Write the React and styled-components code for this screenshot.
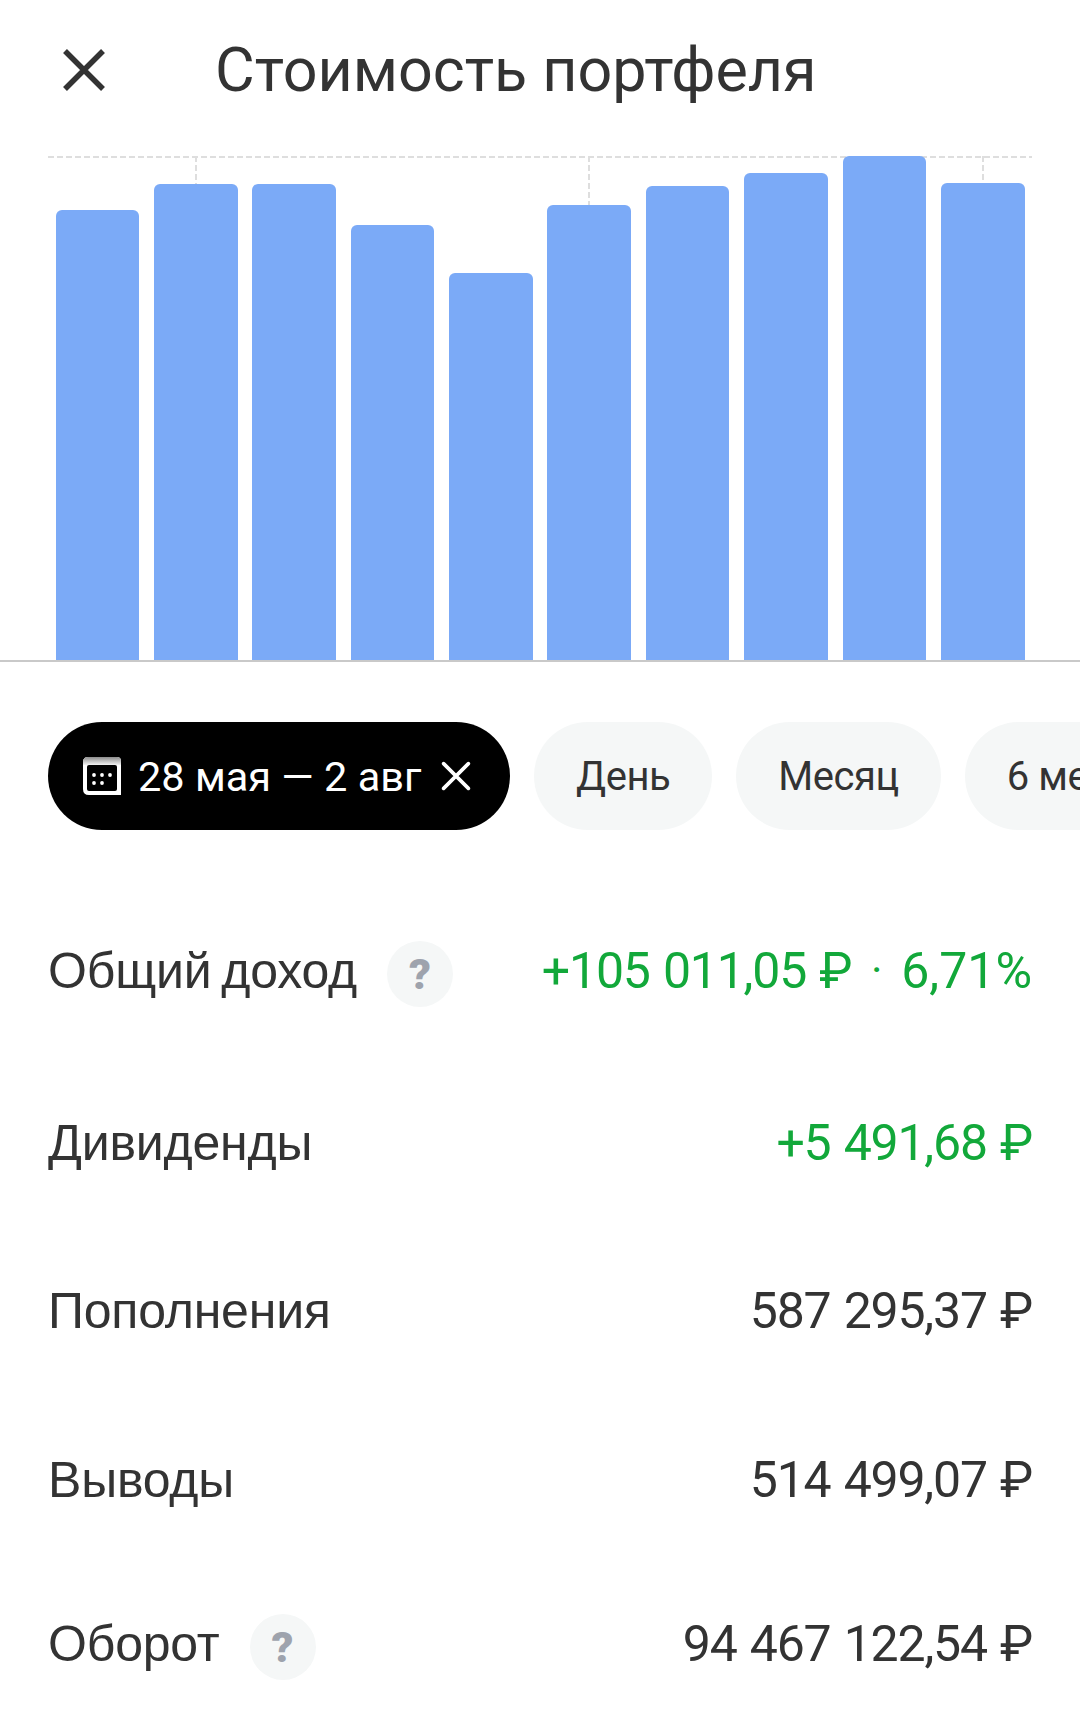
import React from 'react';
import styled, { createGlobalStyle } from 'styled-components';

const GlobalStyle = createGlobalStyle`
  html, body {
    margin: 0;
    padding: 0;
    background: #ffffff;
  }
  body {
    width: 1080px;
    height: 1721px;
    overflow: hidden;
    font-family: Roboto, "Liberation Sans", sans-serif;
    color: #333333;
  }
`;

const Page = styled.div`
  width: 1080px;
  height: 1721px;
  overflow: hidden;
  display: flex;
  flex-direction: column;
`;

const Header = styled.header`
  height: 156px;
  padding: 0 0 16px 61px;
  box-sizing: border-box;
  display: flex;
  align-items: center;
  gap: 108px;
`;

const CloseButton = styled.div`
  width: 46px;
  height: 46px;
  display: flex;
`;

const Title = styled.h1`
  margin: 0;
  font-size: 61px;
  font-weight: 400;
  line-height: 1;
  color: #333333;
`;

const Chart = styled.section`
  height: 506px;
  box-sizing: border-box;
  border-bottom: 2px solid #c9c9c9;
`;

const Plot = styled.div`
  margin: 0 48px;
  height: 100%;
  padding: 0 7.5px;
  display: flex;
  gap: 14.7px;
  background: repeating-linear-gradient(90deg, #dedede 0 6px, transparent 6px 9px) top left / 100% 2px no-repeat;
`;

const Column = styled.div`
  flex: 1;
  display: flex;
  flex-direction: column;
  align-items: center;
  justify-content: flex-end;
`;

const Tick = styled.div`
  flex: 1;
  width: 2px;
  background: repeating-linear-gradient(180deg, #dedede 0 6px, transparent 6px 9px);
`;

const Bar = styled.div`
  width: 100%;
  height: ${(p) => p.$height}px;
  background: #7baaf7;
  border-radius: 6px 6px 0 0;
`;

const Pills = styled.div`
  margin-top: 60px;
  padding-left: 48px;
  display: flex;
  gap: 24px;
  white-space: nowrap;
`;

const Pill = styled.div`
  height: 108px;
  flex-shrink: 0;
  padding: 0 42px;
  box-sizing: border-box;
  display: flex;
  align-items: center;
  border-radius: 54px;
  background: #f5f7f7;
  font-size: 40px;
  letter-spacing: -0.45px;
  color: #333333;
`;

const DatePill = styled(Pill)`
  width: 462px;
  padding: 0 0 0 34px;
  background: #000000;
  color: #ffffff;
  font-size: 41.5px;
  letter-spacing: 0;
`;

const DateText = styled.span`
  margin: 0 20px 0 16px;
`;

const Rows = styled.div`
  padding: 0 48px;
  display: flex;
  flex-direction: column;
`;

const Row = styled.div`
  height: 60px;
  margin-top: ${(p) => p.$gap}px;
  display: flex;
  align-items: center;
  justify-content: space-between;
`;

const Label = styled.div`
  display: flex;
  align-items: center;
  gap: 30px;
  font-family: "Liberation Sans", Arial, sans-serif;
  font-size: 50px;
  letter-spacing: -0.2px;
  word-spacing: -4px;
  color: #333333;
`;

const Value = styled.div`
  display: flex;
  align-items: center;
  font-size: 50px;
  letter-spacing: -1.2px;
  word-spacing: 2px;
  color: ${(p) => (p.$positive ? '#12a83a' : '#333333')};
`;

const Percent = styled.span`
  letter-spacing: 0;
`;

const Dot = styled.span`
  width: 50px;
  text-align: center;
  font-size: 44px;
`;

const Help = styled.span`
  width: 66px;
  height: 66px;
  margin-top: 6px;
  border-radius: 50%;
  background: #f5f7f7;
  display: flex;
  align-items: center;
  justify-content: center;
  font-family: Roboto, sans-serif;
  font-size: 43px;
  font-weight: 900;
  letter-spacing: 0;
  color: #9ea3ad;
`;

const bars = [
  { height: 450 },
  { height: 476, tick: true },
  { height: 476 },
  { height: 435 },
  { height: 387 },
  { height: 455, tick: true },
  { height: 474 },
  { height: 487 },
  { height: 504 },
  { height: 477, tick: true },
];

const rows = [
  { label: 'Общий доход', help: true, value: '+105 011,05 ₽', percent: '6,71%', positive: true, gap: 111 },
  { label: 'Дивиденды', value: '+5 491,68 ₽', positive: true, gap: 112 },
  { label: 'Пополнения', value: '587 295,37 ₽', gap: 108 },
  { label: 'Выводы', value: '514 499,07 ₽', gap: 109 },
  { label: 'Оборот', help: true, value: '94 467 122,54 ₽', gap: 104 },
];

function CrossIcon({ size, color, stroke, cap }) {
  return (
    <svg width={size} height={size} viewBox="0 0 46 46" fill="none">
      <path d="M4 4L42 42M42 4L4 42" stroke={color} strokeWidth={stroke} strokeLinecap={cap} />
    </svg>
  );
}

function CalendarIcon() {
  return (
    <svg width="40" height="40" viewBox="0 0 40 40" fill="none">
      <defs>
        <linearGradient id="calendarTop" x1="0" y1="0" x2="0" y2="1">
          <stop offset="0" stopColor="#8c8c8c" />
          <stop offset="1" stopColor="#f4f4f4" />
        </linearGradient>
      </defs>
      <path d="M6 1H35Q39 1 39 5V39H7Q1 39 1 33V6Q1 1 6 1Z" fill="#ffffff" />
      <path d="M6 1H35Q39 1 39 5V9H1V6Q1 1 6 1Z" fill="url(#calendarTop)" />
      <rect x="5" y="9" width="30" height="26" rx="2" fill="#000000" />
      <g fill="#ffffff">
        <circle cx="12" cy="19" r="1.9" />
        <circle cx="20" cy="19" r="1.9" />
        <circle cx="28" cy="19" r="1.9" />
        <circle cx="12" cy="27" r="1.9" />
        <circle cx="20" cy="27" r="1.9" />
      </g>
    </svg>
  );
}

export default function App() {
  return (
    <Page>
      <GlobalStyle />
      <Header>
        <CloseButton>
          <CrossIcon size={46} color="#333333" stroke={5.5} />
        </CloseButton>
        <Title>Стоимость портфеля</Title>
      </Header>
      <Chart>
        <Plot>
          {bars.map((bar, i) => (
            <Column key={i}>
              {bar.tick && <Tick />}
              <Bar $height={bar.height} />
            </Column>
          ))}
        </Plot>
      </Chart>
      <Pills>
        <DatePill>
          <CalendarIcon />
          <DateText>28 мая — 2 авг</DateText>
          <CrossIcon size={30} color="#ffffff" stroke={5.5} cap="round" />
        </DatePill>
        <Pill>День</Pill>
        <Pill>Месяц</Pill>
        <Pill>6 месяцев</Pill>
      </Pills>
      <Rows>
        {rows.map((row) => (
          <Row key={row.label} $gap={row.gap}>
            <Label>
              {row.label}
              {row.help && <Help>?</Help>}
            </Label>
            <Value $positive={row.positive}>
              {row.value}
              {row.percent && <Dot>·</Dot>}
              {row.percent && <Percent>{row.percent}</Percent>}
            </Value>
          </Row>
        ))}
      </Rows>
    </Page>
  );
}
